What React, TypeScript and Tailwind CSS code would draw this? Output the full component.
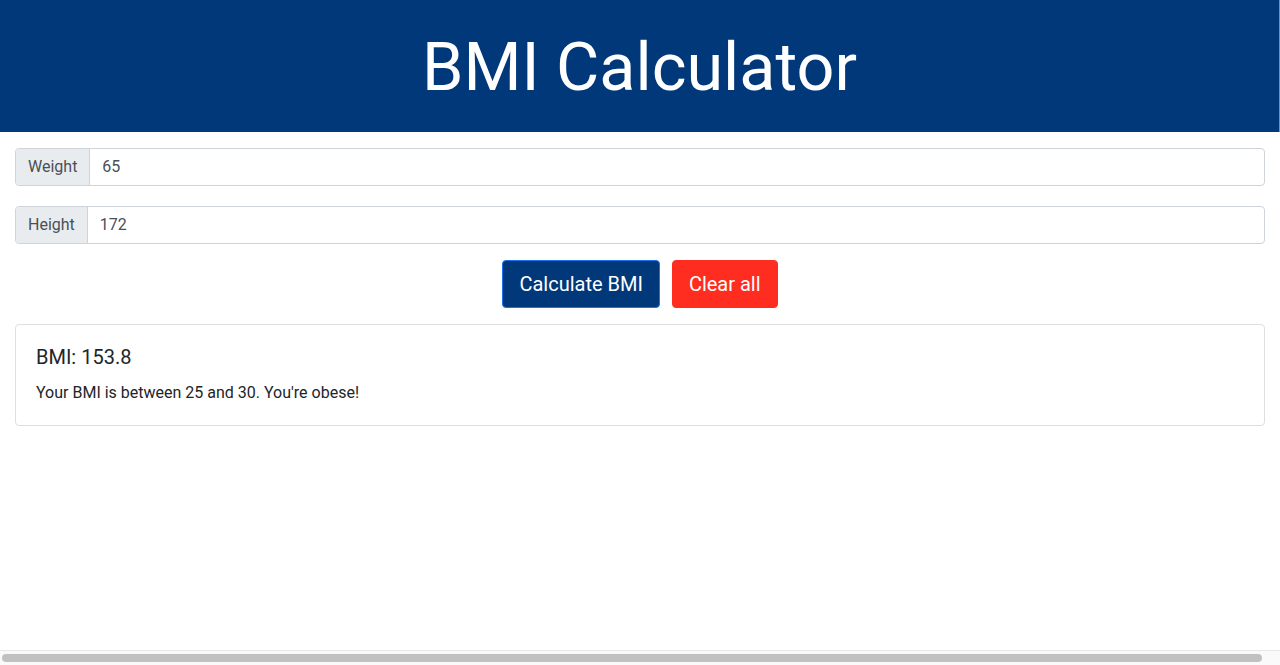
import React from 'react';

const App = () => {
  return (
    <div className="h-[665px] w-full flex flex-col overflow-hidden bg-white font-['Roboto',sans-serif]">
      <div className="flex-1">
        <header className="h-[132px] bg-[#00387a] border-r border-[#7f8ea3] flex items-center justify-center">
          <h1 className="text-[66.5px] leading-none text-white font-normal pt-[2px]">BMI Calculator</h1>
        </header>

        <div className="px-[15px] pt-4">
          <div className="flex h-[38px] border border-[#ced4da] rounded">
            <span className="flex items-center px-3 bg-[#e9ecef] border-r border-[#ced4da] text-[#495057] text-base rounded-l">Weight</span>
            <input className="flex-1 px-3 text-base text-[#495057] outline-none rounded-r" defaultValue="65" />
          </div>

          <div className="flex h-[38px] border border-[#ced4da] rounded mt-5">
            <span className="flex items-center px-3 bg-[#e9ecef] border-r border-[#ced4da] text-[#495057] text-base rounded-l">Height</span>
            <input className="flex-1 px-3 text-base text-[#495057] outline-none rounded-r" defaultValue="172" />
          </div>

          <div className="flex justify-center gap-3 mt-4">
            <button className="h-12 px-4 bg-[#00387a] border border-[#1a73e8] rounded text-white text-xl">Calculate BMI</button>
            <button className="h-12 px-4 bg-[#ff2d1f] border border-[#ff2d1f] rounded text-white text-xl">Clear all</button>
          </div>

          <div className="mt-4 border border-[#dfdfdf] rounded px-5 pt-5 pb-5 text-[#212529]">
            <h5 className="text-xl leading-6 mb-3">BMI: 153.8</h5>
            <p className="text-base leading-6">Your BMI is between 25 and 30. You're obese!</p>
          </div>
        </div>
      </div>

      {/* horizontal scrollbar strip */}
      <div className="h-[15px] bg-[#fafafa] border-t border-[#e8e8e8] flex items-center px-[2px]">
        <div className="h-[8px] w-[1260px] rounded-full bg-[#c1c1c1]" />
      </div>
    </div>
  );
};

export default App;
